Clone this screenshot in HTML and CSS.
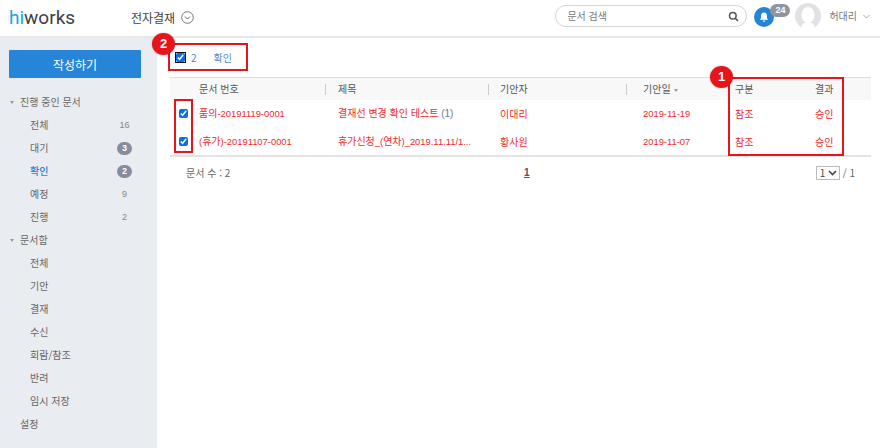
FILE: index.html
```html
<!DOCTYPE html>
<html lang="ko">
<head>
<meta charset="utf-8">
<title>전자결재</title>
<link rel="stylesheet" href="styles.css">
</head>
<body>
<header class="topbar">
  <div class="logo"><span class="logo-h">hi</span>works</div>
  <div class="app-title">전자결재
    <svg class="app-caret" width="13" height="13" viewBox="0 0 13 13"><circle cx="6.5" cy="6.5" r="5.8" fill="none" stroke="#777"/><path d="M4 5.5l2.5 2.5L9 5.5" fill="none" stroke="#666"/></svg>
  </div>
  <div class="top-right">
    <div class="search"><span>문서 검색</span>
      <svg width="11" height="11" viewBox="0 0 11 11"><circle cx="4.8" cy="4.8" r="3.3" fill="none" stroke="#555" stroke-width="1.5"/><path d="M7.3 7.3l2.6 2.6" stroke="#555" stroke-width="1.6"/></svg>
    </div>
    <div class="bell">
      <span class="bell-circle"><svg width="10" height="11" viewBox="0 0 10 11"><path d="M5 0.5c-2 0-3 1.5-3 3.3v2.2L1 7.8h8L8 6V3.8C8 2 7 .5 5 .5z" fill="#fff"/><path d="M3.8 8.6h2.4a1.2 1.2 0 0 1-2.4 0z" fill="#fff"/></svg></span>
      <span class="bell-count">24</span>
    </div>
    <svg class="avatar" width="26" height="26" viewBox="0 0 26 26"><circle cx="13" cy="13" r="13" fill="#e2e2e2"/><ellipse cx="13" cy="12" rx="6.5" ry="8" fill="#fff"/><path d="M6 26c0-5 3-7 7-7s7 2 7 7z" fill="#fff"/></svg>
    <span class="user">허대리</span>
    <svg class="user-caret" width="7" height="5" viewBox="0 0 7 5"><path d="M.5 1l3 3 3-3" fill="none" stroke="#aaa"/></svg>
  </div>
</header>
<div class="body">
  <aside class="side">
    <button class="compose">작성하기</button>
    <div class="nav-head"><i class="tri"></i>진행 중인 문서</div>
    <div class="nav-item">전체<span class="num">16</span></div>
    <div class="nav-item">대기<span class="pill">3</span></div>
    <div class="nav-item active">확인<span class="pill">2</span></div>
    <div class="nav-item">예정<span class="num">9</span></div>
    <div class="nav-item">진행<span class="num">2</span></div>
    <div class="nav-head"><i class="tri"></i>문서함</div>
    <div class="nav-item">전체</div>
    <div class="nav-item">기안</div>
    <div class="nav-item">결재</div>
    <div class="nav-item">수신</div>
    <div class="nav-item">회람/참조</div>
    <div class="nav-item">반려</div>
    <div class="nav-item">임시 저장</div>
    <div class="nav-head">설정</div>
  </aside>
  <main class="main">
    <div class="toolbar">
      <input class="cb cb-all" type="checkbox" checked>
      <span class="sel-count">2</span>
      <span class="sel-action">확인</span>
    </div>
    <div class="table">
      <div class="row head">
        <div class="c-check"></div>
        <div class="c-no">문서 번호</div>
        <div class="c-title sep">제목</div>
        <div class="c-user sep">기안자</div>
        <div class="c-date sep">기안일<i class="sort"></i></div>
        <div class="c-type">구분</div>
        <div class="c-res">결과</div>
      </div>
      <div class="row item">
        <div class="c-check"><input class="cb" type="checkbox" checked></div>
        <div class="c-no">품의<span class="lat">-20191119-0001</span></div>
        <div class="c-title">결재선 변경 확인 테스트 <span class="cnt lat">(1)</span></div>
        <div class="c-user">이대리</div>
        <div class="c-date"><span class="lat">2019-11-19</span></div>
        <div class="c-type">참조</div>
        <div class="c-res">승인</div>
      </div>
      <div class="row item">
        <div class="c-check"><input class="cb" type="checkbox" checked></div>
        <div class="c-no"><span class="lat">(</span>휴가<span class="lat">)-20191107-0001</span></div>
        <div class="c-title">휴가신청<span class="lat">_(</span>연차<span class="lat">)_2019.11.11/1...</span></div>
        <div class="c-user">황사원</div>
        <div class="c-date"><span class="lat">2019-11-07</span></div>
        <div class="c-type">참조</div>
        <div class="c-res">승인</div>
      </div>
    </div>
    <div class="foot">
      <span class="total">문서 수 : 2</span>
      <span class="page">1</span>
      <span class="pager"><span class="page-select">1<svg width="9" height="6" viewBox="0 0 9 6"><path d="M1 1l3.5 3.5L8 1" fill="none" stroke="#444" stroke-width="1.6"/></svg></span> / 1</span>
    </div>
    <div class="mark mark-tool"></div>
    <div class="mark mark-checks"></div>
    <div class="mark mark-cols"></div>
    <div class="badge badge-1">1</div>
    <div class="badge badge-2">2</div>
  </main>
</div>
</body>
</html>
```
FILE: styles.css
```css
* { box-sizing: border-box; }
html, body { margin: 0; height: 100%; }
body { width: 880px; height: 448px; overflow: hidden; background: #fff; color: #555; font: 10px/14px "Noto Sans CJK KR", "Noto Sans", sans-serif; }
.lat { font-family: "Liberation Sans", sans-serif; font-size: 9.4px; }
.topbar { height: 38px; display: flex; align-items: center; border-bottom: 2px solid #e8e8e8; padding: 0 0 1px 9px; }
.logo { width: 122px; font: 400 19px/20px Roboto, sans-serif; color: #3a4048; }
.logo-h { color: #17a5e6; }
.app-title { display: flex; align-items: center; gap: 6px; font-size: 12px; color: #444; }
.top-right { margin-left: auto; display: flex; align-items: center; padding-right: 10px; padding-bottom: 3px; }
.search { width: 192px; height: 22px; border: 1px solid #d5d5d5; border-radius: 11px; display: flex; align-items: center; justify-content: space-between; padding: 0 7px 0 11px; color: #777; }
.bell { width: 41px; margin-left: 7px; height: 26px; position: relative; }
.bell-circle { position: absolute; left: 0; top: 4px; width: 20px; height: 20px; border-radius: 50%; background: #2484d8; display: flex; align-items: center; justify-content: center; }
.bell-count { position: absolute; left: 16px; top: 1px; width: 20px; height: 13px; border-radius: 7px; background: #8e96a4; color: #fff; font: 700 9px/13px "Liberation Sans", sans-serif; text-align: center; }
.avatar { flex: none; }
.user { margin-left: 8px; color: #777; }
.user-caret { margin-left: 6px; }
.body { display: flex; height: 410px; }
.side { width: 157px; background: #e9ecf0; padding: 12px 25px 0 9px; color: #666; }
.compose { display: block; width: 132px; height: 28px; margin: 0 0 13px; border: 0; background: #2785d9; color: #fff; font: 12px "Noto Sans CJK KR", sans-serif; border-radius: 1px; }
.nav-head { height: 23px; line-height: 22px; padding-left: 11px; position: relative; }
.tri { position: absolute; left: 1px; top: 10px; border: 2.5px solid transparent; border-top: 3px solid #999; border-bottom: 0; }
.nav-item { height: 23px; display: flex; align-items: center; justify-content: space-between; padding: 0 0 1px 21px; }
.nav-item.active { color: #2a7fd6; font-weight: 500; }
.num { width: 15px; text-align: center; color: #888; font: 9px "Liberation Sans", sans-serif; }
.pill { width: 15px; height: 13px; border-radius: 7px; background: #858c9b; color: #fff; text-align: center; font: 700 9px/13px "Liberation Sans", sans-serif; }
.main { flex: 1; position: relative; padding: 0 9px 0 13px; }
.toolbar { height: 39px; display: flex; align-items: center; padding-left: 6px; }
.cb { appearance: auto; width: 9px; height: 9px; margin: 0; accent-color: #0a6ee8; }
.cb-all { outline: 1.5px solid #111; }
.sel-count { margin-left: 6px; color: #4a8bd8; }
.sel-action { margin-left: 17px; color: #4a8bd8; }
.table { border-top: 1px solid #ddd; border-bottom: 2px solid #e3e3e3; }
.row { display: flex; align-items: center; padding-bottom: 1px; }
.head { height: 22px; background: #f8f8f8; color: #555; }
.item { height: 28px; color: #f0282d; }
.item:last-child { height: 27px; padding-bottom: 0; }
.row > div { flex: none; }
.c-check { width: 29px; padding-left: 9px; display: flex; }
.c-no { width: 126px; }
.c-title { width: 163px; padding-left: 13px; position: relative; white-space: nowrap; }
.c-user { width: 138px; padding-left: 12px; position: relative; }
.c-date { width: 109px; padding-left: 17px; position: relative; }
.c-type { width: 80px; }
.c-res { width: 32px; }
.sep::before { content: ""; position: absolute; left: 0; top: 2px; height: 11px; width: 1px; background: #ccc; }
.sort { display: inline-block; margin-left: 3px; vertical-align: 1px; border: 2.5px solid transparent; border-top: 3px solid #999; border-bottom: 0; }
.cnt { color: #6b7b93; font-size: 10px; }
.foot { display: flex; align-items: center; height: 32px; position: relative; padding: 0 16px 0 16px; }
.total { color: #666; }
.page { position: absolute; left: 354px; color: #555; font-weight: 700; text-decoration: underline; font-family: "Liberation Sans", sans-serif; }
.pager { margin-left: auto; display: flex; align-items: center; gap: 3px; color: #666; }
.page-select { width: 24px; height: 14px; border: 1px solid #bbb; display: flex; align-items: center; justify-content: space-between; padding: 0 2px 0 3px; color: #444; }
.mark { position: absolute; border: 2px solid #e8141c; }
.mark-tool { left: 11px; top: 5px; width: 80px; height: 28px; }
.mark-checks { left: 17px; top: 61px; width: 19px; height: 54px; }
.mark-cols { left: 571px; top: 39px; width: 116px; height: 79px; }
.badge { position: absolute; width: 23px; height: 22px; border-radius: 50%; background: #e8141c; color: #fff; text-align: center; font: 700 13px/22px "Liberation Sans", sans-serif; box-shadow: 0 0 2px rgba(0,0,0,.3); }
.badge-1 { left: 553px; top: 28px; }
.badge-2 { left: -5px; top: -5px; }
```
